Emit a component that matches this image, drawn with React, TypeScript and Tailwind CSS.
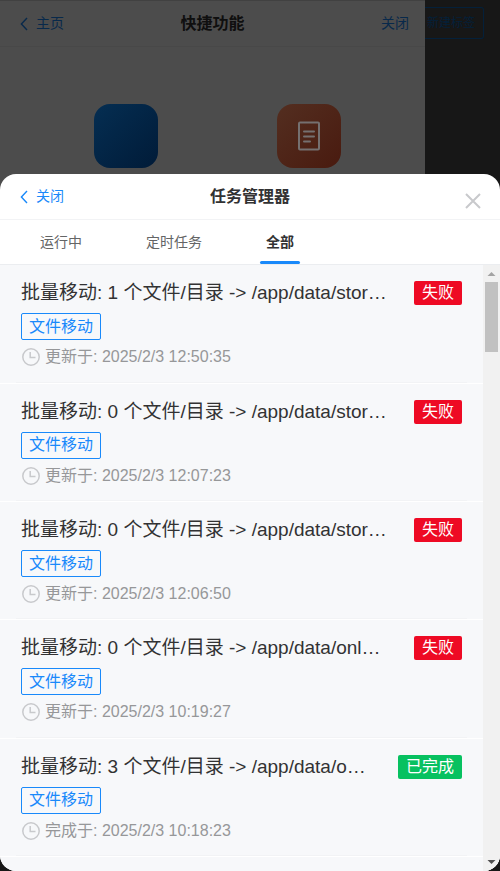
import React from "react";

type Task = {
  title: string;
  tag: string;
  time: string;
  status: "failed" | "done";
};

const tasks: Task[] = [
  { title: "批量移动: 1 个文件/目录 -> /app/data/stor…", tag: "文件移动", time: "更新于: 2025/2/3 12:50:35", status: "failed" },
  { title: "批量移动: 0 个文件/目录 -> /app/data/stor…", tag: "文件移动", time: "更新于: 2025/2/3 12:07:23", status: "failed" },
  { title: "批量移动: 0 个文件/目录 -> /app/data/stor…", tag: "文件移动", time: "更新于: 2025/2/3 12:06:50", status: "failed" },
  { title: "批量移动: 0 个文件/目录 -> /app/data/onl…", tag: "文件移动", time: "更新于: 2025/2/3 10:19:27", status: "failed" },
  { title: "批量移动: 3 个文件/目录 -> /app/data/o…", tag: "文件移动", time: "完成于: 2025/2/3 10:18:23", status: "done" },
];

function ChevronLeft() {
  return (
    <svg width="8" height="14" viewBox="0 0 8 14" fill="none" stroke="currentColor" strokeWidth="1.4" aria-hidden="true">
      <path d="M7 1 1.4 7 7 13" />
    </svg>
  );
}

function ClockIcon() {
  return (
    <svg className="shrink-0" width="20" height="20" viewBox="0 0 20 20" fill="none" stroke="#c8c9cc" strokeWidth="1.5" aria-hidden="true">
      <circle cx="10" cy="10" r="8.2" />
      <path d="M9.2 5v5.6h5.3" />
    </svg>
  );
}

function TaskRow({ task }: { task: Task }) {
  return (
    <li className="flex flex-col border-b border-white">
      <div className="flex grow items-start pt-[13px] pr-[21px] pl-[21px]">
        <div className="min-w-0 grow">
          <h3 className="truncate text-[19px] leading-[30px] text-[#323233]">{task.title}</h3>
          <span className="mt-[5px] flex h-[27px] w-20 items-center justify-center rounded-xs border border-[#1989fa] text-[16px] leading-6 text-[#1989fa]">
            {task.tag}
          </span>
          <p className="mt-[5px] flex items-center gap-1 text-[16px] leading-6 text-[#969799]">
            <ClockIcon />
            {task.time}
          </p>
        </div>
        <span
          className={
            task.status === "failed"
              ? "mt-[3px] flex h-6 shrink-0 items-center rounded-xs bg-[#ee0a24] px-2 text-[16px] leading-6 text-white"
              : "mt-[3px] flex h-6 shrink-0 items-center rounded-xs bg-[#07c160] px-2 text-[16px] leading-6 text-white"
          }
        >
          {task.status === "failed" ? "失败" : "已完成"}
        </span>
      </div>
      <div className="mx-4 h-px bg-[#f2f3f5]" />
    </li>
  );
}

function ShortcutsPage() {
  return (
    <div className="flex min-h-screen bg-[#171717]">
      <section className="mb-5 w-[85%] bg-[#4c4c4c]">
        <header className="grid h-[47px] grid-cols-3 items-center border-t border-b border-t-[#414141] border-b-[#484848] px-4 text-[14px]">
          <button className="flex items-center gap-2 justify-self-start pl-1 text-[#08294b]">
            <ChevronLeft />
            主页
          </button>
          <h1 className="text-center text-[16px] font-bold text-[#0f0f0f]">快捷功能</h1>
          <button className="justify-self-end text-[#08294b]">关闭</button>
        </header>
        <div className="grid grid-cols-2 justify-items-center pt-[57px] pr-6 pl-[34px]">
          <button aria-label="应用" className="size-16 rounded-2xl bg-linear-to-br from-[#052e52] to-[#011b38]" />
          <button aria-label="任务" className="flex size-16 items-center justify-center rounded-2xl bg-linear-to-br from-[#532e20] to-[#491a0f]">
            <svg width="24" height="30" viewBox="0 0 24 30" fill="none" stroke="#757070" strokeWidth="2" strokeLinecap="round" aria-hidden="true">
              <rect x="2" y="1.5" width="20" height="27" rx="1" />
              <path d="M7 10.5h10M7 15.5h10M7 20.5h6" />
            </svg>
          </button>
        </div>
      </section>
      <aside className="grow pt-[7px]">
        <button className="h-8 rounded-r-[3px] border border-l-0 border-[#04203a] pr-2 pl-[2px] text-[12px] text-[#04203a]">新建标签</button>
      </aside>
    </div>
  );
}

function Scrollbar() {
  return (
    <div className="flex w-[17px] shrink-0 flex-col items-center bg-[#f1f1f1]" aria-hidden="true">
      <svg width="17" height="17" viewBox="0 0 17 17">
        <path d="M4.5 11h8l-4-4z" fill="#a3a3a3" />
      </svg>
      <div className="h-[70px] w-[13px] bg-[#c1c1c1]" />
      <svg className="mt-auto" width="17" height="17" viewBox="0 0 17 17">
        <path d="M4.5 6h8l-4 4z" fill="#505050" />
      </svg>
    </div>
  );
}

export default function App() {
  return (
    <div className="relative h-screen overflow-hidden font-['Liberation_Sans','Noto_Sans_CJK_SC',sans-serif]" lang="zh-CN">
      <ShortcutsPage />
      <div role="dialog" aria-label="任务管理器" className="absolute inset-x-0 bottom-0 flex h-[80%] flex-col overflow-hidden rounded-2xl bg-white">
        <header className="relative grid h-[46px] shrink-0 grid-cols-3 items-center border-b border-[#f2f3f5] px-4">
          <button className="flex items-center gap-2 justify-self-start pl-1 text-[14px] text-[#1989fa]">
            <ChevronLeft />
            关闭
          </button>
          <h2 className="text-center text-[16px] font-bold text-[#323233]">任务管理器</h2>
          <button aria-label="关闭弹窗" className="absolute top-4 right-4 flex size-[22px] items-center justify-center text-[#c8c9cc]">
            <svg width="16" height="16" viewBox="0 0 16 16" fill="none" stroke="currentColor" strokeWidth="2" aria-hidden="true">
              <path d="m1 1 14 14M15 1 1 15" />
            </svg>
          </button>
        </header>
        <nav role="tablist" className="flex h-[45px] shrink-0 border-b border-[#ebedf0] px-2 text-[14px] text-[#646566]">
          <button role="tab" aria-selected="false" className="px-8">运行中</button>
          <button role="tab" aria-selected="false" className="px-8">定时任务</button>
          <button role="tab" aria-selected="true" className="relative px-8 font-bold text-[#323233]">
            全部
            <span className="absolute bottom-0 left-1/2 h-[3px] w-10 -translate-x-1/2 rounded-[3px] bg-[#1989fa]" />
          </button>
        </nav>
        <div className="flex min-h-0 grow bg-[#f7f8fa]">
          <div className="min-w-0 grow overflow-hidden">
            <ul className="grid h-[592px] grid-rows-5">
              {tasks.map((task) => (
                <TaskRow key={task.time} task={task} />
              ))}
            </ul>
          </div>
          <Scrollbar />
        </div>
      </div>
    </div>
  );
}
